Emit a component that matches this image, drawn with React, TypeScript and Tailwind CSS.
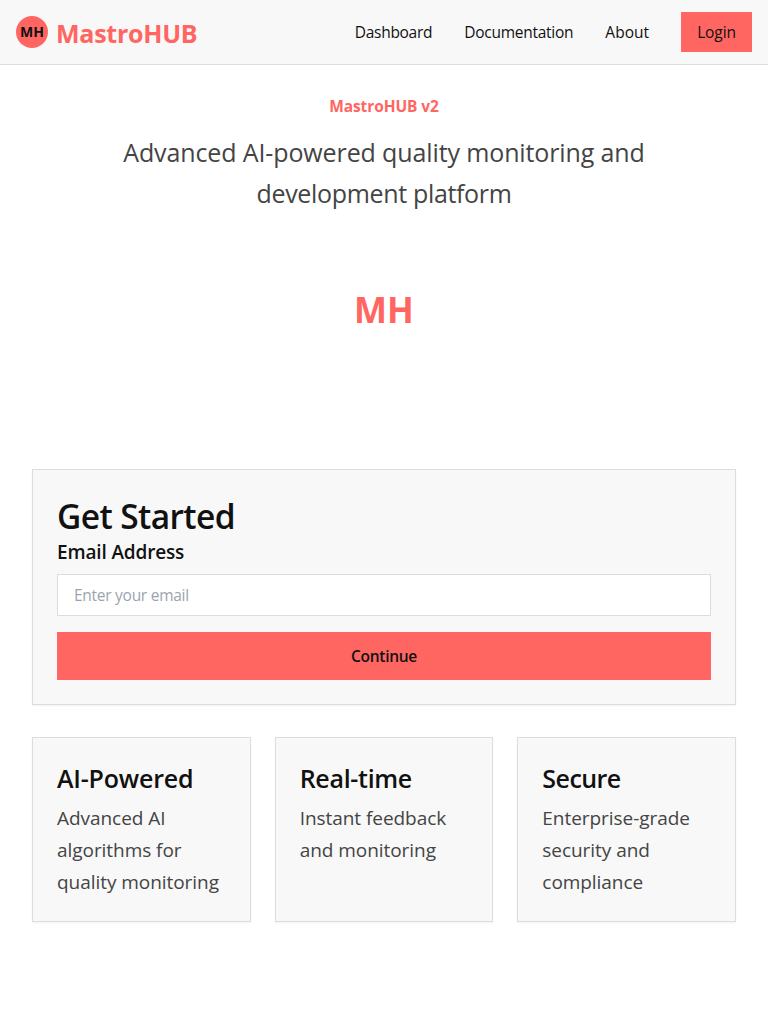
import React from "react";

const navLinks = [
  { label: "Dashboard", spacing: "tracking-[-0.3px]" },
  { label: "Documentation", spacing: "tracking-[-0.25px]" },
  { label: "About", spacing: "tracking-normal" },
];

const features = [
  { title: "AI-Powered", text: "Advanced AI algorithms for quality monitoring", spacing: "tracking-[-0.2px]" },
  { title: "Real-time", text: "Instant feedback and monitoring", spacing: "tracking-[-0.3px]" },
  { title: "Secure", text: "Enterprise-grade security and compliance", spacing: "tracking-[-0.55px]" },
];

export default function App() {
  return (
    <div className="min-h-screen bg-white font-['Open_Sans','Noto_Sans',sans-serif] text-[#111111]">
      <header className="flex h-[65px] items-center justify-between border-b border-[#dddddd] bg-[#f8f8f8] px-4">
        <div className="flex items-center gap-2">
          <div className="flex size-8 items-center justify-center rounded-full bg-[#ff6661] text-sm font-bold">MH</div>
          <span className="pt-px text-[25px] leading-8 font-bold tracking-[-0.25px] text-[#ff6661]">MastroHUB</span>
        </div>
        <nav className="flex items-center gap-8 text-[15.5px]">
          {navLinks.map((link) => (
            <a key={link.label} href="#" className={`pt-0.5 ${link.spacing}`}>{link.label}</a>
          ))}
          <button className="h-10 w-[71px] bg-[#ff6661] pt-0.5 tracking-[-0.1px]">Login</button>
        </nav>
      </header>

      <main className="px-8 pt-[29px]">
        <section className="flex flex-col items-center text-center">
          <h1 className="text-[15.5px] leading-6 font-bold tracking-[-0.1px] text-[#ff6661]">MastroHUB v2</h1>
          <p className="mt-[14px] text-[25px] leading-[41px] text-[#444444]">
            <span className="block tracking-[-0.12px]">Advanced AI-powered quality monitoring and</span>
            <span className="block tracking-[-0.33px]">development platform</span>
          </p>
          <div className="mt-8 flex h-32 items-center justify-center text-[35px] font-bold text-[#ff6661]">MH</div>
        </section>

        <section className="mt-[95px] h-[236px] border border-[#dddddd] bg-[#f8f8f8] px-6 pt-6 shadow-[0_1px_2px_rgba(0,0,0,0.05)]">
          <h2 className="text-[33.5px] leading-[44px] font-semibold tracking-[-0.6px]">Get Started</h2>
          <label htmlFor="email" className="block text-[19px] leading-7 font-semibold tracking-[-0.15px]">Email Address</label>
          <input
            id="email"
            type="email"
            placeholder="Enter your email"
            className="mt-2 block h-[42px] w-full border border-[#dddddd] bg-white px-4 text-[15.5px] tracking-[-0.27px] placeholder:text-[#9ca3af]"
          />
          <button className="mt-4 block h-12 w-full bg-[#ff6661] pt-0.5 text-[15.5px] font-semibold tracking-[-0.3px]">Continue</button>
        </section>

        <section className="mt-8 grid grid-cols-3 gap-6">
          {features.map((feature) => (
            <article
              key={feature.title}
              className="h-[185px] border border-[#dddddd] bg-[#f8f8f8] px-6 pt-6 shadow-[0_1px_2px_rgba(0,0,0,0.05)]"
            >
              <h3 className={`text-[25px] leading-8 font-semibold ${feature.spacing}`}>{feature.title}</h3>
              <p className="-mr-2 mt-2 text-[19px] leading-8 tracking-[-0.05px] text-[#444444]">{feature.text}</p>
            </article>
          ))}
        </section>
      </main>
    </div>
  );
}
